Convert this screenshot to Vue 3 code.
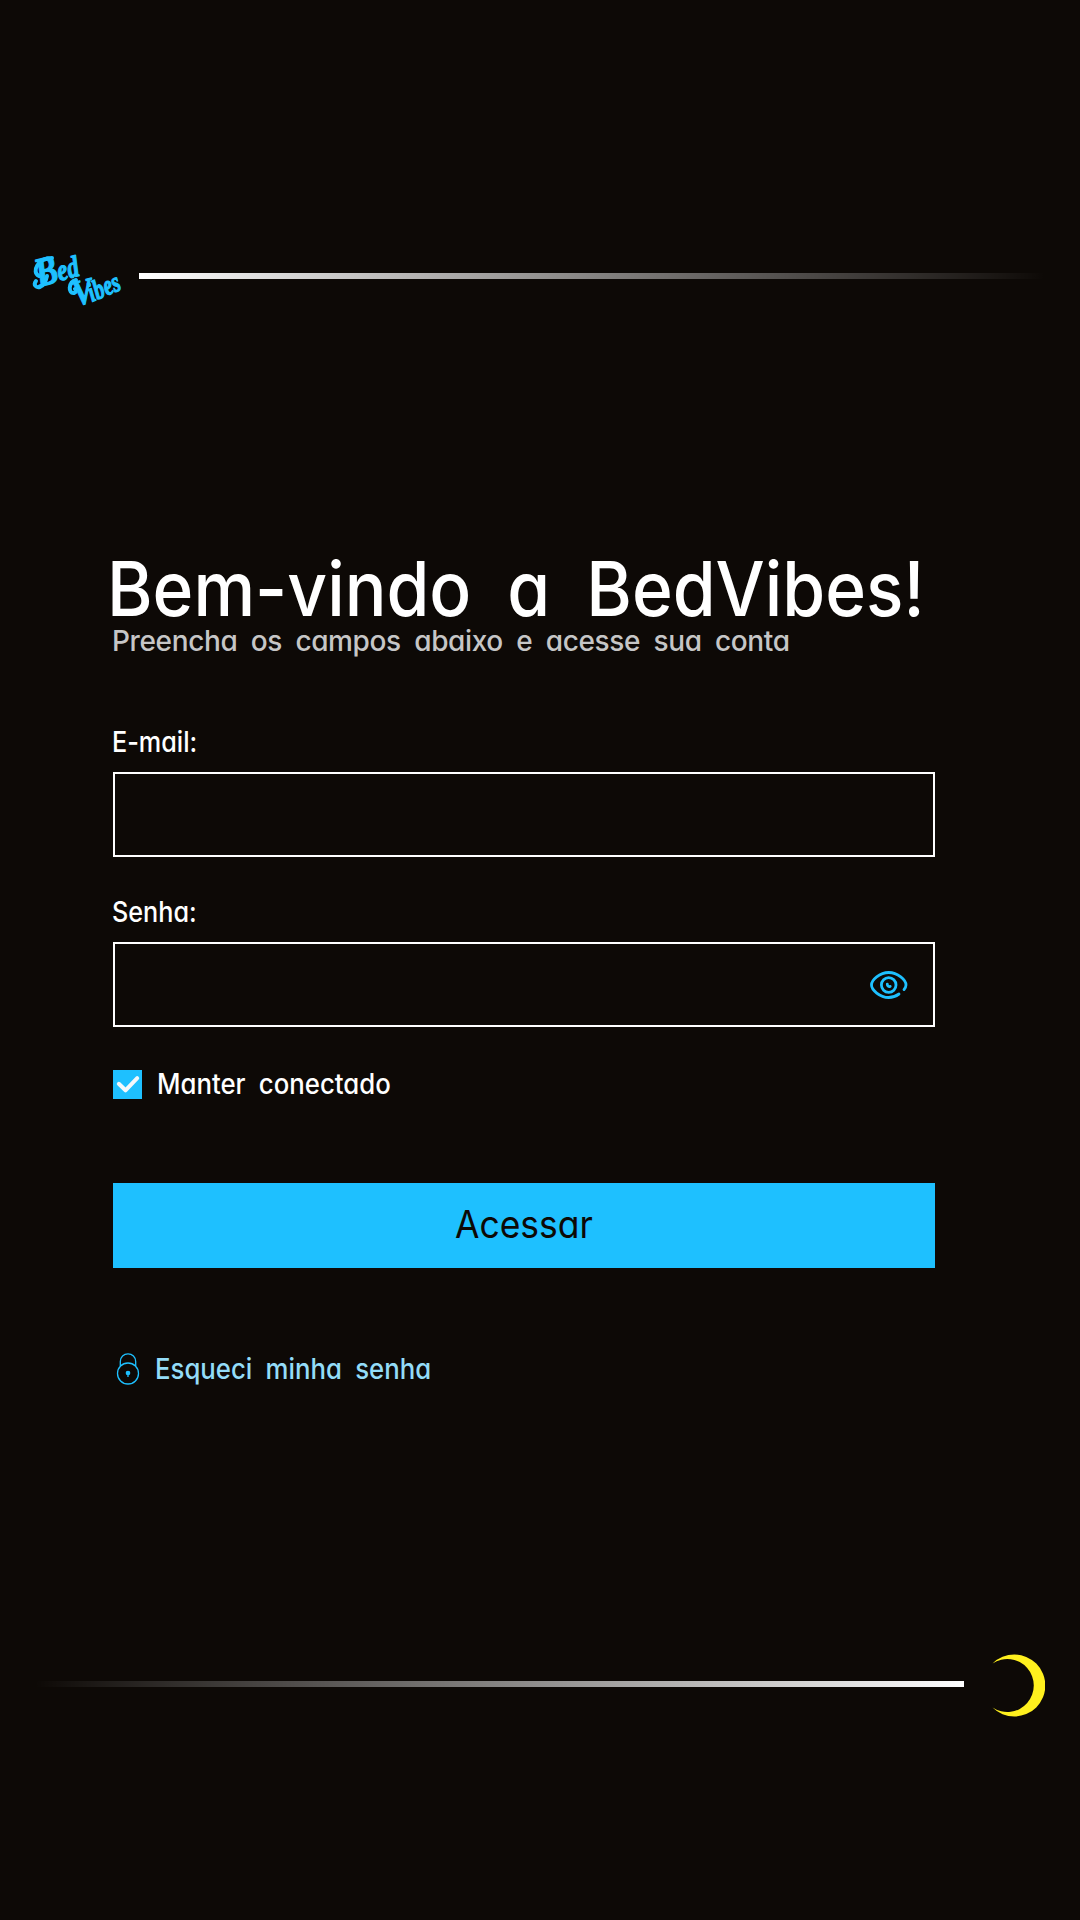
<script setup>
import { ref } from 'vue'

const email = ref('')
const password = ref('')
const keep = ref(true)
const visible = ref(false)
</script>

<template>
  <main class="page">
    <header class="top">
      <svg class="logo" width="92" height="60" viewBox="0 0 92 60" role="img" aria-label="Bed Vibes">
        <g class="logo-text">
          <text transform="translate(8 37) rotate(-15)" font-size="41" textLength="22" lengthAdjust="spacingAndGlyphs">B</text>
          <text transform="translate(28.500 31) rotate(-15)" font-size="30" textLength="22" lengthAdjust="spacingAndGlyphs">ed</text>
          <text transform="translate(45 56) rotate(-14)" font-size="36" textLength="20" lengthAdjust="spacingAndGlyphs">V</text>
          <text transform="translate(61 52) rotate(-23)" font-size="28" textLength="33" lengthAdjust="spacingAndGlyphs">ibes</text>
        </g>
        <path d="M8 26C0 22 7 8 21 8M5 31C2 35 5 38 9 37Q14 35 16 26M45 30C37 32 37 44 43 43Q46 42 44 39" />
      </svg>
      <div class="rule fade-right"></div>
    </header>

    <form class="form" @submit.prevent>
      <h1 class="title">Bem-vindo a BedVibes!</h1>
      <p class="subtitle">Preencha os campos abaixo e acesse sua conta</p>

      <label class="label l-mail" for="email">E-mail:</label>
      <div class="field"><input id="email" v-model="email" type="email" /></div>

      <label class="label l-pass" for="password">Senha:</label>
      <div class="field">
        <input id="password" v-model="password" :type="visible ? 'text' : 'password'" />
        <svg class="eye" width="38" height="30" viewBox="0 0 38 30" @click="visible = !visible">
          <path d="M34 19.600C35.400 17.800 36 16.400 36 15C36 10.200 27.800 2.500 18.700 2.500S1.500 10.200 1.500 15S9.700 27.500 18.700 27.500C22.700 27.500 26 26.200 29 24" />
          <circle cx="18.700" cy="15" r="7.300" />
          <path d="M17.300 14.200C17.300 16 18.600 16.900 20.200 16.400" />
        </svg>
      </div>

      <label class="keep">
        <input v-model="keep" type="checkbox" class="native" />
        <span class="box">
          <svg v-if="keep" width="29" height="29" viewBox="0 0 29 29"><path d="M5.800 13.800L12.500 20.300L24.200 8.200" /></svg>
        </span>
        <span class="keep-text">Manter conectado</span>
      </label>

      <button class="submit" type="submit"><span>Acessar</span></button>

      <a class="forgot" href="#">
        <svg width="24" height="33" viewBox="0 0 24 33">
          <circle cx="12" cy="20.500" r="10.500" />
          <path d="M4.300 13V8.500A7.700 7.700 0 0 1 19.700 8.500V13" />
          <circle class="solid" cx="12" cy="20" r="1.700" />
          <path d="M12 20.500V24" />
        </svg>
        <span>Esqueci minha senha</span>
      </a>
    </form>

    <footer class="bottom">
      <div class="rule fade-left"></div>
      <svg class="moon" width="53" height="64" viewBox="0 0 53 64">
        <path d="M0.500 9.500A31 31 0 1 1 0.500 53.500A26.500 26.500 0 1 0 0.500 9.500Z" />
      </svg>
    </footer>
  </main>
</template>

<style>
html,
body {
  margin: 0;
  background: #0d0906;
}
</style>

<style scoped>
.page {
  box-sizing: border-box;
  width: 1080px;
  height: 1920px;
  display: flex;
  flex-direction: column;
  background: #0d0906;
  color: #fff;
  font-family: Inter, "Liberation Sans", sans-serif;
  font-feature-settings: "cv11" 1, "calt" 0;
  overflow: hidden;
}
.top {
  display: flex;
  align-items: center;
  height: 60px;
  margin: 250px 35px 0 31px;
}
.logo {
  flex: none;
  margin-right: 16px;
  overflow: visible;
}
.logo-text {
  fill: #1ec0ff;
  stroke: #1ec0ff;
  stroke-width: 1.200;
  stroke-linejoin: round;
  font-family: "Liberation Serif", serif;
  font-weight: 700;
  font-style: italic;
}
.logo > path {
  fill: none;
  stroke: #1ec0ff;
  stroke-width: 4;
  stroke-linecap: round;
}
.rule {
  flex: 1;
  height: 6px;
}
.top .rule {
  margin-top: -8px;
}
.fade-right {
  background: linear-gradient(to right, #fff, transparent);
}
.fade-left {
  background: linear-gradient(to left, #fff, transparent);
}
.form {
  display: flex;
  flex-direction: column;
  width: 822px;
  height: 1092px;
  margin: 247px 0 0 113px;
}
.title {
  margin: 0 0 0 -6px;
  height: 64px;
  line-height: 64px;
  font-size: 75.500px;
  font-weight: 500;
  word-spacing: 19px;
  white-space: nowrap;
  transform: scaleX(0.92);
  transform-origin: 0 0;
}
.subtitle {
  margin: 6px 0 0 -1px;
  height: 28px;
  line-height: 28px;
  font-size: 28px;
  font-weight: 500;
  letter-spacing: -0.370px;
  word-spacing: 6.300px;
  color: #c6c6c6;
  white-space: nowrap;
}
.label {
  height: 40px;
  line-height: 40px;
  font-size: 28px;
  font-weight: 500;
  margin-left: -1px;
  transform: scaleX(0.9);
  transform-origin: 0 0;
}
.l-mail {
  margin-top: 67px;
  margin-bottom: 10px;
}
.l-pass {
  margin-top: 35px;
  margin-bottom: 10px;
}
.field {
  box-sizing: border-box;
  display: flex;
  align-items: center;
  height: 85px;
  border: 2px solid #fff;
  padding-right: 25px;
}
.field input {
  flex: 1;
  height: 100%;
  padding: 0 20px;
  box-sizing: border-box;
  border: 0;
  outline: 0;
  background: transparent;
  color: #fff;
  font-size: 28px;
}
.eye {
  flex: none;
}
.eye path,
.eye circle {
  fill: none;
  stroke: #1ec0ff;
  stroke-width: 2.800;
  stroke-linecap: round;
}
.keep {
  display: flex;
  align-items: center;
  height: 29px;
  margin-top: 43px;
}
.native {
  display: none;
}
.box {
  width: 29px;
  height: 29px;
  background: #1ec0ff;
  margin-right: 15px;
}
.box svg {
  display: block;
}
.box path {
  fill: none;
  stroke: #f4f8fb;
  stroke-width: 4;
  stroke-linecap: round;
  stroke-linejoin: round;
}
.keep-text {
  margin-top: -2px;
  font-size: 28px;
  font-weight: 500;
  word-spacing: 7px;
  transform: scaleX(0.92);
  transform-origin: 0 0;
}
.submit {
  height: 85px;
  margin-top: 84px;
  padding: 0 0 2px;
  border: 0;
  border-radius: 0;
  background: #1ec0ff;
  color: #0d0906;
  font: 400 37.500px Inter, sans-serif;
  font-feature-settings: "cv11" 1;
}
.submit span {
  display: inline-block;
  transform: scaleX(0.945);
}
.forgot {
  display: flex;
  align-items: center;
  height: 34px;
  margin: 84px 0 0 3px;
  color: #93dcf8;
  text-decoration: none;
  font-size: 28px;
  font-weight: 500;
  word-spacing: 7px;
}
.forgot svg {
  margin-right: 15px;
  fill: none;
  stroke: #1ec0ff;
  stroke-width: 1.300;
}
.forgot span {
  transform: scaleX(0.92);
  transform-origin: 0 0;
}
.forgot .solid {
  fill: #1ec0ff;
}
.bottom {
  display: flex;
  align-items: center;
  height: 64px;
  margin: 5px 35px 0 35px;
}
.bottom .rule {
  margin-top: -4px;
}
.moon {
  flex: none;
  margin-left: 28px;
  fill: #fff01e;
}
</style>
